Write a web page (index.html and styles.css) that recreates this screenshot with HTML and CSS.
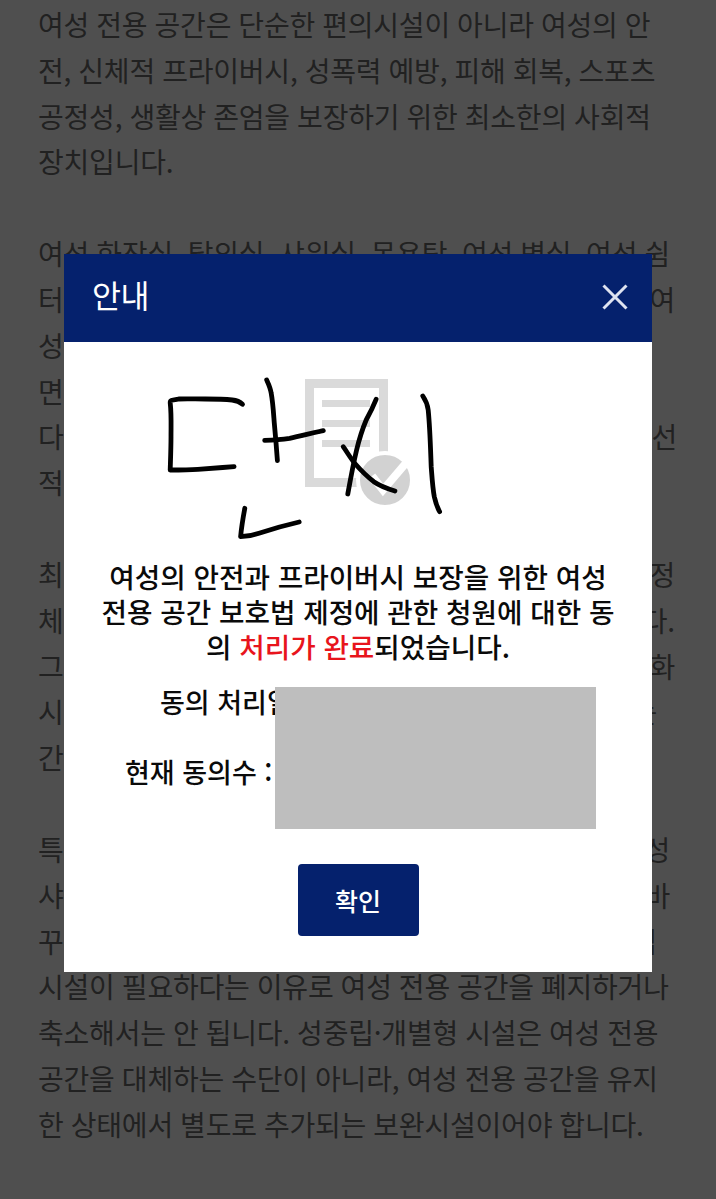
FILE: index.html
```html
<!DOCTYPE html>
<html lang="ko">
<head>
<meta charset="utf-8">
<title>안내</title>
<link rel="stylesheet" href="styles.css">
</head>
<body>
<main class="article">
  <p class="para">
    <span class="line">여성 전용 공간은 단순한 편의시설이 아니라 여성의 안</span>
    <span class="line">전, 신체적 프라이버시, 성폭력 예방, 피해 회복, 스포츠</span>
    <span class="line">공정성, 생활상 존엄을 보장하기 위한 최소한의 사회적</span>
    <span class="line">장치입니다.</span>
  </p>
  <p class="para">
    <span class="line">여성 화장실, 탈의실, 샤워실, 목욕탕, 여성 병실, 여성 쉼</span>
    <span class="line fit">터 등은 안전과 프라이버시를 위해 꼭 필요하며 여</span>
    <span class="line">성의 일상을 지키는 기본 시설입니다. 이 공간이 없으</span>
    <span class="line">면 여성은 불안과 위험을 감수해야 합니다.</span>
    <span class="line fit fit-l">다양한 시설이 논의되더라도 보호가 가장 우선</span>
    <span class="line">적으로 고려되어야 합니다.</span>
  </p>
  <p class="para">
    <span class="line fit">최근 여성 전용 공간을 보호하기 위한 법률 제정</span>
    <span class="line fit">체계가 충분히 마련되어 있지 않은 실정입니다.</span>
    <span class="line fit">그 결과 현장마다 기준이 달라 혼란이 심화</span>
    <span class="line fit fit-xs">시설 이용자의 권리 보장이 어려워지고 있는</span>
    <span class="line">간입니다.</span>
  </p>
  <p class="para">
    <span class="line fit fit-s">특히 공중화장실과 탈의실, 샤워실은 여성</span>
    <span class="line fit fit-s">샤워실 이용 과정의 위험이 커 구조를 바</span>
    <span class="line fit fit-xs">꾸는 일에 신중해야 합니다. 개별형 성중립</span>
    <span class="line">시설이 필요하다는 이유로 여성 전용 공간을 폐지하거나</span>
    <span class="line">축소해서는 안 됩니다. 성중립·개별형 시설은 여성 전용</span>
    <span class="line">공간을 대체하는 수단이 아니라, 여성 전용 공간을 유지</span>
    <span class="line">한 상태에서 별도로 추가되는 보완시설이어야 합니다.</span>
  </p>
</main>

<div class="overlay"></div>

<section class="modal">
  <header class="modal-head">
    <h2 class="modal-title">안내</h2>
    <svg class="close" viewBox="0 0 26 26" aria-label="닫기">
      <path d="M1.5 1.5 24.5 24.5M24.5 1.5 1.5 24.5"/>
    </svg>
  </header>
  <div class="modal-body">
    <svg class="art" viewBox="64 342 588 200">
      <g class="doc">
        <rect class="doc-page" x="309.5" y="383.5" width="74" height="99"/>
        <path class="doc-lines" d="M322 403.5H370M322 423.5H370M322 443.5H370"/>
        <circle class="doc-badge" cx="385" cy="480" r="27"/>
        <path class="doc-check" d="M372 476 383 490 406 463"/>
      </g>
      <g class="ink">
        <path d="M242.5 404.3C239 401 235 400.3 232.2 400 223 399 214 399 205.4 399 195 399 187 398.5 178.6 399 172 400 170 400 170.2 402.7 171.5 414 171 425 171 436.7 171 448 170.5 460 170.2 470 180 470 188 470 197.8 469.3 210 468.5 222 467.5 234.1 466.7"/>
        <path d="M266.7 380C269 385 270.5 388 271.2 393.3 273 403 273.5 413 274.3 423.3 275.5 436 276.5 448 277.4 460.7"/>
        <path d="M264.7 440.3C273 440 281 439.5 289.6 438.3 301 436 312 433 323.3 430.7"/>
        <path d="M244.8 508.3C243 518 241.5 527 240.6 536.7 247 536.5 253 535.5 259 533.3 272 529 286 525 299.2 522"/>
        <path d="M376.1 399.3C373 407 370 413 366.2 420 362 430 359 440 356.6 450 353 465 350.5 479 347.8 494"/>
        <path d="M343.2 446.7C347 452 350.5 458 354.7 463.3 360.5 470 367 476.5 373.8 481.7 380 486 387 488.5 394.9 491"/>
        <path d="M422.8 396C425.5 400 427.5 404 428.2 410 430 428 430.5 448 431.2 466.7 432 477 432.5 487 434.3 496.7 435.5 502 437 507 439.6 511.7"/>
      </g>
    </svg>
    <p class="message">여성의 안전과 프라이버시 보장을 위한 여성<br>전용 공간 보호법 제정에 관한 청원에 대한 동<br>의 <strong class="accent">처리가 완료</strong>되었습니다.</p>
    <div class="stats">
      <span class="stat stat-date">동의 처리일 :</span>
      <span class="stat stat-count">현재 동의수 :</span>
      <div class="redact"></div>
    </div>
    <button class="confirm" type="button">확인</button>
  </div>
</section>
</body>
</html>
```

FILE: styles.css
```css
* { box-sizing: border-box; }

html, body {
  margin: 0;
  height: 1199px;
  overflow: hidden;
}

body {
  background: #fff;
  font-family: "Noto Sans CJK KR", "Noto Sans", sans-serif;
}

.article {
  padding: 2px 0 0 38px;
  color: #6c6c6c;
  font-size: 28px;
  letter-spacing: -0.2px;
  word-spacing: -0.5px;
  line-height: 45.83px;
}

.para {
  margin: 0 0 45.83px;
}

.line {
  display: block;
  white-space: nowrap;
}

.fit {
  width: 637px;
  white-space: normal;
  text-align: justify;
  text-align-last: justify;
}

.fit-l { width: 639px; }
.fit-s { width: 632px; }
.fit-xs { width: 619px; }

.overlay {
  position: fixed;
  inset: 0;
  background: rgba(0, 0, 0, 0.69);
}

.modal {
  position: absolute;
  left: 64px;
  top: 254px;
  width: 588px;
  height: 718px;
  background: #fff;
  display: flex;
  flex-direction: column;
}

.modal-head {
  height: 88px;
  padding: 0 24px 3px 28px;
  background: #05216d;
  display: flex;
  align-items: center;
  justify-content: space-between;
  flex: none;
}

.modal-title {
  margin: 0 0 3px;
  color: #fff;
  font-size: 31.5px;
  font-weight: 400;
  letter-spacing: -0.5px;
  line-height: 1;
}

.close {
  width: 26px;
  height: 26px;
  display: block;
}

.close path {
  fill: none;
  stroke: #dfe3f0;
  stroke-width: 3;
}

.modal-body {
  display: flex;
  flex-direction: column;
  align-items: center;
  flex: 1;
}

.art {
  display: block;
  width: 588px;
  height: 200px;
  flex: none;
  overflow: visible;
}

.doc-page {
  fill: none;
  stroke: #dadada;
  stroke-width: 9;
}

.doc-lines {
  fill: none;
  stroke: #dadada;
  stroke-width: 7;
}

.doc-badge {
  fill: #d2d2d2;
  stroke: #fff;
  stroke-width: 4;
}

.doc-check {
  fill: none;
  stroke: #fff;
  stroke-width: 8;
}

.ink path {
  fill: none;
  stroke: #000;
  stroke-width: 4.8;
  stroke-linecap: round;
  stroke-linejoin: round;
}

.message {
  margin: 17px 0 0;
  width: 100%;
  color: #0a0a0a;
  font-size: 27.7px;
  font-weight: 500;
  letter-spacing: 0;
  line-height: 35px;
  text-align: center;
  white-space: nowrap;
}

.accent {
  color: #e8141c;
  font-weight: 500;
}

.stats {
  margin-top: 23px;
  width: 100%;
  height: 142px;
  display: grid;
  grid-template-columns: 211px 321px;
  grid-template-rows: 70px 70px;
  color: #0a0a0a;
  font-size: 27px;
  font-weight: 500;
  line-height: 30px;
  white-space: nowrap;
}

.stat {
  grid-column: 1;
  align-self: start;
}

.stat-date {
  grid-row: 1;
  margin-left: 96px;
}

.stat-count {
  grid-row: 2;
  margin-left: 61px;
}

.redact {
  grid-column: 2;
  grid-row: 1 / 3;
  height: 142px;
  background: #bebebe;
}

.confirm {
  margin-top: 35px;
  width: 121px;
  height: 72px;
  padding: 0;
  border: 0;
  border-radius: 4px;
  background: #05216d;
  color: #fff;
  font-family: inherit;
  font-size: 25px;
  font-weight: 500;
  line-height: 1;
}
```
